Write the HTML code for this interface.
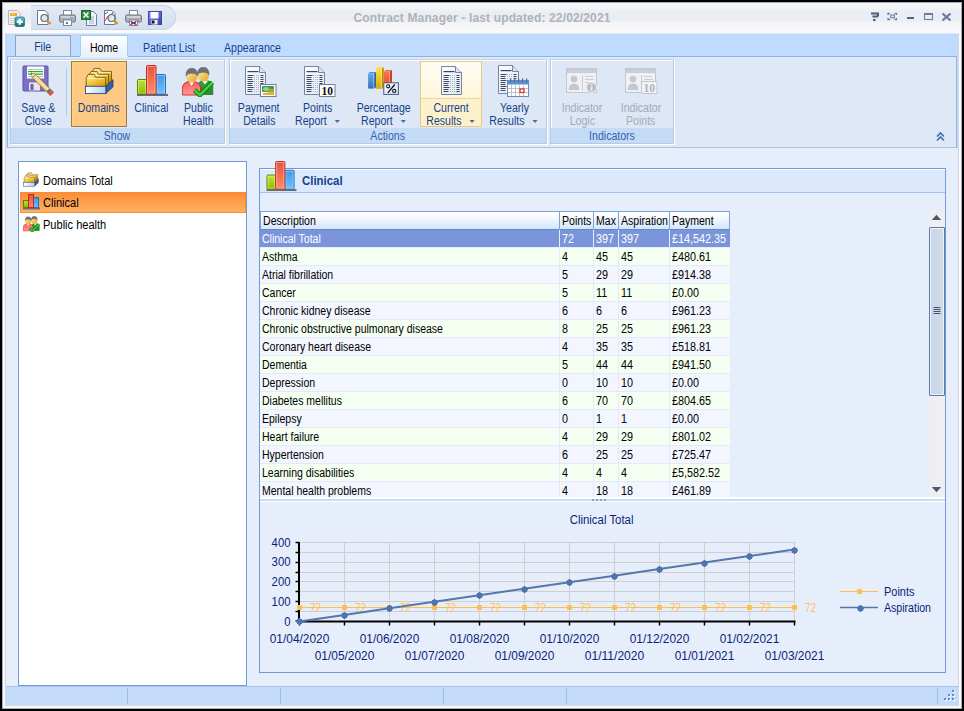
<!DOCTYPE html>
<html><head><meta charset="utf-8">
<style>
*{margin:0;padding:0;box-sizing:border-box}
html,body{width:964px;height:711px;overflow:hidden;background:#000}
body{position:relative;font-family:"Liberation Sans",sans-serif;font-size:12px;color:#000}
.a{position:absolute}
.t{position:absolute;white-space:nowrap;line-height:14px}
.s{display:inline-block}
</style></head><body>
<svg width="0" height="0" style="position:absolute">
<defs>
<linearGradient id="docg" x1="0" y1="0" x2="1" y2="1"><stop offset="0" stop-color="#ffffff"/><stop offset="1" stop-color="#dfe6f2"/></linearGradient>
<linearGradient id="gg" x1="0" y1="0" x2="0" y2="1"><stop offset="0" stop-color="#c4e03a"/><stop offset="1" stop-color="#8cbc00"/></linearGradient>
<linearGradient id="rg" x1="0" y1="0" x2="0" y2="1"><stop offset="0" stop-color="#e8503a"/><stop offset="1" stop-color="#ff8a70"/></linearGradient>
<linearGradient id="bg" x1="0" y1="0" x2="0" y2="1"><stop offset="0" stop-color="#3a98e8"/><stop offset="1" stop-color="#70c0ff"/></linearGradient>
<linearGradient id="fg" x1="0" y1="0" x2="0.6" y2="1"><stop offset="0" stop-color="#fff3b0"/><stop offset="0.45" stop-color="#f5cf50"/><stop offset="1" stop-color="#d89a08"/></linearGradient>
<linearGradient id="tg" x1="0" y1="0" x2="1" y2="0"><stop offset="0" stop-color="#ffffff"/><stop offset="1" stop-color="#b8cff0"/></linearGradient>
<symbol id="doc" viewBox="0 0 23 31">
 <path d="M1.5 1.5 H15.5 L21.5 7.5 V29.5 H1.5 Z" fill="url(#docg)" stroke="#7585a2"/>
 <path d="M15.5 1.5 V7.5 H21.5" fill="#dde3ee" stroke="#7585a2"/>
 <rect x="3.5" y="6" width="11" height="1.2" fill="#3a4660"/>
 <rect x="3.5" y="10" width="6" height="1" fill="#3a4660"/><rect x="10" y="10" width="1" height="1" fill="#a8b2c6"/><rect x="12" y="10" width="1" height="1" fill="#a8b2c6"/><rect x="14" y="10" width="1" height="1" fill="#a8b2c6"/><rect x="16.5" y="10" width="3" height="1" fill="#3a4660"/><rect x="3.5" y="12" width="5" height="1" fill="#3a4660"/><rect x="10" y="12" width="1" height="1" fill="#a8b2c6"/><rect x="12" y="12" width="1" height="1" fill="#a8b2c6"/><rect x="14" y="12" width="1" height="1" fill="#a8b2c6"/><rect x="16.5" y="12" width="3" height="1" fill="#3a4660"/><rect x="3.5" y="14" width="5" height="1" fill="#3a4660"/><rect x="10" y="14" width="1" height="1" fill="#a8b2c6"/><rect x="12" y="14" width="1" height="1" fill="#a8b2c6"/><rect x="14" y="14" width="1" height="1" fill="#a8b2c6"/><rect x="16.5" y="14" width="3" height="1" fill="#3a4660"/><rect x="3.5" y="16" width="6" height="1" fill="#3a4660"/><rect x="10" y="16" width="1" height="1" fill="#a8b2c6"/><rect x="12" y="16" width="1" height="1" fill="#a8b2c6"/><rect x="14" y="16" width="1" height="1" fill="#a8b2c6"/><rect x="16.5" y="16" width="3" height="1" fill="#3a4660"/><rect x="3.5" y="18" width="5" height="1" fill="#3a4660"/><rect x="10" y="18" width="1" height="1" fill="#a8b2c6"/><rect x="12" y="18" width="1" height="1" fill="#a8b2c6"/><rect x="14" y="18" width="1" height="1" fill="#a8b2c6"/><rect x="16.5" y="18" width="3" height="1" fill="#3a4660"/><rect x="3.5" y="20" width="5" height="1" fill="#3a4660"/><rect x="10" y="20" width="1" height="1" fill="#a8b2c6"/><rect x="12" y="20" width="1" height="1" fill="#a8b2c6"/><rect x="14" y="20" width="1" height="1" fill="#a8b2c6"/><rect x="16.5" y="20" width="3" height="1" fill="#3a4660"/><rect x="3.5" y="22" width="6" height="1" fill="#3a4660"/><rect x="10" y="22" width="1" height="1" fill="#a8b2c6"/><rect x="12" y="22" width="1" height="1" fill="#a8b2c6"/><rect x="14" y="22" width="1" height="1" fill="#a8b2c6"/><rect x="16.5" y="22" width="3" height="1" fill="#3a4660"/><rect x="3.5" y="24" width="5" height="1" fill="#3a4660"/><rect x="10" y="24" width="1" height="1" fill="#a8b2c6"/><rect x="12" y="24" width="1" height="1" fill="#a8b2c6"/><rect x="14" y="24" width="1" height="1" fill="#a8b2c6"/><rect x="16.5" y="24" width="3" height="1" fill="#3a4660"/><rect x="3.5" y="26" width="5" height="1" fill="#3a4660"/><rect x="10" y="26" width="1" height="1" fill="#a8b2c6"/><rect x="12" y="26" width="1" height="1" fill="#a8b2c6"/><rect x="14" y="26" width="1" height="1" fill="#a8b2c6"/><rect x="16.5" y="26" width="3" height="1" fill="#3a4660"/>
</symbol>
<symbol id="chart" viewBox="0 0 32 32">
 <rect x="1" y="29" width="31" height="2" fill="#6e6a72"/>
 <rect x="1.5" y="14.5" width="9" height="14.5" rx="1" fill="url(#gg)" stroke="#4f8a00"/>
 <rect x="2.6" y="15.6" width="6.8" height="12.4" fill="none" stroke="#e4f890" stroke-width="0.8" opacity="0.7"/>
 <rect x="20" y="9.5" width="9.5" height="19.5" rx="1" fill="url(#bg)" stroke="#1f70c0"/>
 <rect x="21.1" y="10.6" width="7.3" height="17.4" fill="none" stroke="#b8e4ff" stroke-width="0.8" opacity="0.7"/>
 <rect x="10.5" y="0.5" width="9.5" height="28.5" rx="1" fill="url(#rg)" stroke="#b8301c"/>
 <rect x="11.6" y="1.6" width="7.3" height="26.4" fill="none" stroke="#ffc0b0" stroke-width="0.8" opacity="0.8"/>
</symbol>
<linearGradient id="face" x1="0" y1="0" x2="1" y2="1"><stop offset="0" stop-color="#fff0b0"/><stop offset="1" stop-color="#e6a020"/></linearGradient>
<linearGradient id="redb" x1="0" y1="0" x2="0" y2="1"><stop offset="0" stop-color="#ff5a5a"/><stop offset="1" stop-color="#ff9a9a"/></linearGradient>
<linearGradient id="grnb" x1="0" y1="0" x2="0" y2="1"><stop offset="0" stop-color="#3aa040"/><stop offset="1" stop-color="#2a8a30"/></linearGradient>
<symbol id="people" viewBox="0 0 32 30">
 <path d="M15.5 27.5 V19 Q16 13.5 23 13.5 Q30.5 13.5 30.8 20 V27.5 Z" fill="url(#grnb)" stroke="#1f7a25" stroke-width="0.8"/>
 <path d="M20 13.6 L23 17.5 L26 13.6Z" fill="#fff"/>
 <ellipse cx="21.3" cy="8.2" rx="5.6" ry="6.4" fill="url(#face)"/>
 <path d="M15.6 8 Q15.3 0.3 21.3 0.3 Q27.2 0.3 27 8 Q26 5 21.3 5.2 Q17 5 15.6 8Z" fill="#707070" stroke="#5a5a5a" stroke-width="0.5"/>
 <path d="M0.4 28 V21 Q0.8 14.5 9.5 14.3 Q18 14.5 18.5 21 V28 Z" fill="url(#redb)" stroke="#d82020" stroke-width="0.9"/>
 <path d="M6.5 14.5 L9.5 20 L12.5 14.5Z" fill="#fff" stroke="#d82020" stroke-width="0.5"/>
 <ellipse cx="9.8" cy="9.2" rx="5.7" ry="6.5" fill="url(#face)"/>
 <path d="M4 9 Q3.8 1.2 9.8 1.2 Q15.8 1.2 15.6 9 Q14.6 6 9.8 6.2 Q5.4 6 4 9Z" fill="#707070" stroke="#5a5a5a" stroke-width="0.5"/>
 <path d="M12.5 23 L17.8 28 L30.5 15.5" fill="none" stroke="#0a7a0a" stroke-width="4.6" stroke-linejoin="miter"/>
 <path d="M12.5 23 L17.8 28 L30.5 15.5" fill="none" stroke="#40d040" stroke-width="2.6"/>
</symbol>
<symbol id="folders" viewBox="0 0 30 28"><path d="M8.5 4.4 L10 1.4000000000000004 H16 L17.5 4.4 H27.5 V15.4 H8 V4.4Z" fill="url(#fg)" stroke="#5e4a18" stroke-width="0.8"/><path d="M9.2 5.4 H26.6" stroke="#fff6c8" stroke-width="0.8"/><path d="M5.5 7.4 L7 4.4 H13 L14.5 7.4 H24.5 V18.4 H5 V7.4Z" fill="url(#fg)" stroke="#5e4a18" stroke-width="0.8"/><path d="M6.2 8.4 H23.6" stroke="#fff6c8" stroke-width="0.8"/><path d="M2.7 10.4 L4.2 7.4 H10.2 L11.7 10.4 H21.7 V21.4 H2.2 V10.4Z" fill="url(#fg)" stroke="#5e4a18" stroke-width="0.8"/><path d="M3.4000000000000004 11.4 H20.8" stroke="#fff6c8" stroke-width="0.8"/><path d="M21.8 19.3 L29 12.6 V19.8 L21.8 26.6Z" fill="#35609c" stroke="#1d3e70" stroke-width="0.8"/><rect x="1.4" y="19.3" width="20.4" height="7.3" fill="url(#tg)" stroke="#2a4a80" stroke-width="0.9"/></symbol>
<symbol id="card" viewBox="0 0 32 26">
 <rect x="0.5" y="0.5" width="30" height="24" fill="#eef0f4" stroke="#c2c6ce"/>
 <rect x="1" y="1" width="29" height="4" fill="#c9cdd5"/>
 <circle cx="8" cy="11" r="3.3" fill="#c3c7cf"/>
 <path d="M2.5 22 Q3 15.5 8 15.5 Q13 15.5 13.5 22Z" fill="#c3c7cf"/>
 <rect x="16" y="7" width="1" height="16" fill="#c9cdd5"/>
 <rect x="19" y="8" width="8" height="1" fill="#c9cdd5"/>
 <rect x="19" y="11" width="9" height="1" fill="#c9cdd5"/>
 <rect x="19" y="14" width="8" height="1" fill="#c9cdd5"/>
</symbol>
<symbol id="chart16" viewBox="0 0 17 17">
 <rect x="0" y="13.5" width="17" height="2" fill="#6e6a78"/>
 <rect x="0.5" y="6.5" width="5" height="7" fill="url(#gg)" stroke="#4f8a00"/>
 <rect x="10.5" y="3.5" width="5" height="10" fill="url(#bg)" stroke="#1f70c0"/>
 <rect x="5.5" y="0.5" width="5" height="13" fill="url(#rg)" stroke="#b8301c"/>
</symbol></defs></svg>
<div class="a" style="left:2px;top:2px;width:960px;height:707px;background:#fcf8fb;border:1px solid #a3afc2"></div>
<div class="a" style="left:5px;top:33px;width:954px;height:673px;background:#d3d8e0"></div>
<div class="a" style="left:3px;top:3px;width:958px;height:30px;background:linear-gradient(#fafafd 0px,#f6f5f7 1.5px,#f5f5f7 5px,#eef0f5 7px,#ebedf4 10px,#ebedf4 17px,#f3f2f5 19px,#f6f6f7 21px,#f5f7fc 25px,#fdf9fc 29px,#fdf9fc 30px)"></div>
<div class="a" style="left:31px;top:5px;width:145px;height:25px;background:linear-gradient(#e4eaf4,#d3dfee);border:1px solid #c6d4e8;border-left:none;border-radius:0 13px 13px 0"></div>
<!-- app icon -->
<svg class="a" style="left:7px;top:9px" width="18" height="18" viewBox="0 0 18 18">
 <path d="M1.5 1.5 H10 L13 4.5 V15.5 H1.5Z" fill="#f0f0f0" stroke="#b8b8b8"/>
 <rect x="3" y="4" width="7" height="3" fill="#f5a030"/><rect x="4" y="4.5" width="4" height="1.5" fill="#f8d040"/>
 <rect x="3" y="9" width="6" height="0.7" fill="#c8c8c8"/><rect x="3" y="11" width="6" height="0.7" fill="#c8c8c8"/><rect x="3" y="13" width="5" height="0.7" fill="#c8c8c8"/>
 <linearGradient id="tq" x1="0" y1="0" x2="0" y2="1"><stop offset="0" stop-color="#60c0d8"/><stop offset="1" stop-color="#0a6a70"/></linearGradient><rect x="8" y="8" width="9.5" height="9.5" rx="1.5" fill="url(#tq)" stroke="#0e6068" stroke-width="0.6"/>
 <path d="M12.75 9.8 V15.7 M9.8 12.75 H15.7" stroke="#fff" stroke-width="2.4"/>
</svg>
<!-- QAT icons -->
<svg class="a" style="left:36px;top:10px" width="16" height="16" viewBox="0 0 16 16">
 <path d="M1.5 0.5 H9 L12 3.5 V14.5 H1.5Z" fill="#fff" stroke="#6a7890"/>
 <circle cx="8.5" cy="8" r="3.5" fill="#dce8f4" stroke="#606870" stroke-width="1.2"/>
 <path d="M11 10.5 L14.5 14" stroke="#e09020" stroke-width="2.4"/>
</svg>
<svg class="a" style="left:59px;top:10px" width="17" height="16" viewBox="0 0 17 16">
 <rect x="4.5" y="0.5" width="8" height="5" fill="#fff" stroke="#808890"/>
 <rect x="0.5" y="5" width="16" height="7" rx="1.5" fill="#a8adb4" stroke="#707880"/>
 <rect x="2" y="6" width="13" height="2" fill="#d0d4da"/>
 <rect x="4.5" y="10" width="8" height="5.5" fill="#fff" stroke="#808890"/>
 <rect x="7" y="12" width="2" height="2" fill="#3a7ad0"/>
 <rect x="11" y="7" width="3" height="1" fill="#5aaae0"/>
</svg>
<svg class="a" style="left:81px;top:10px" width="17" height="16" viewBox="0 0 17 16">
 <path d="M5.5 1.5 H12.5 L15.5 4.5 V15.5 H5.5Z" fill="#eef3fb" stroke="#6a7fa8"/>
 <path d="M8 7 H13 M8 9 H13 M8 11 H13 M8 13 H13" stroke="#8aa0c8" stroke-width="0.8"/>
 <rect x="0.5" y="0.5" width="9" height="9" fill="#2e8a3a" stroke="#1d6a28"/>
 <path d="M2.5 2.5 L7.5 7.5 M7.5 2.5 L2.5 7.5" stroke="#fff" stroke-width="1.6"/>
</svg>
<svg class="a" style="left:103px;top:10px" width="16" height="16" viewBox="0 0 16 16">
 <path d="M1.5 0.5 H9 L12 3.5 V14.5 H1.5Z" fill="#fff" stroke="#6a7890"/>
 <path d="M2 11 L5 6 L7 8 L10 2" fill="none" stroke="#e02020" stroke-width="0.9"/>
 <path d="M2 4 L5 2" stroke="#2040d0" stroke-width="0.9"/>
 <circle cx="8.5" cy="8" r="3.5" fill="#dce8f4" fill-opacity="0.85" stroke="#606870" stroke-width="1.2"/>
 <path d="M11 10.5 L14.5 14" stroke="#e09020" stroke-width="2.4"/>
</svg>
<svg class="a" style="left:125px;top:10px" width="17" height="16" viewBox="0 0 17 16">
 <rect x="4.5" y="0.5" width="8" height="5" fill="#fff" stroke="#808890"/>
 <rect x="0.5" y="5" width="16" height="7" rx="1.5" fill="#a8adb4" stroke="#707880"/>
 <rect x="2" y="6" width="13" height="2" fill="#d0d4da"/>
 <rect x="4.5" y="10" width="8" height="5.5" fill="#fff" stroke="#808890"/>
 <path d="M5.5 11 L11.5 15 M11.5 11 L5.5 15" stroke="#e02020" stroke-width="1.2"/>
 <rect x="6" y="12.3" width="5" height="1.4" fill="#2040c0"/>
</svg>
<svg class="a" style="left:148px;top:11px" width="14" height="14" viewBox="0 0 14 14">
 <linearGradient id="sv" x1="0" y1="0" x2="1" y2="1"><stop offset="0" stop-color="#8a8af0"/><stop offset="1" stop-color="#3c3cb0"/></linearGradient>
 <rect x="0.5" y="0.5" width="13" height="13" fill="url(#sv)" stroke="#30308a" stroke-width="0.8"/>
 <rect x="2.5" y="1" width="8" height="6.5" fill="#fafaff"/>
 <rect x="3.5" y="9" width="6" height="4.5" fill="#f0f0f0"/>
 <rect x="4" y="9.5" width="2.5" height="3" fill="#111"/>
</svg>
<!-- window controls -->
<svg class="a" style="left:868px;top:11px" width="88" height="12" viewBox="0 0 88 12">
 <path d="M3 2.5 H10 V5.5 M10 5.5 H5.5 V6.5" fill="none" stroke="#4d5c78" stroke-width="2"/>
 <rect x="5" y="8" width="2.5" height="2" fill="#4d5c78"/>
 <path d="M20 4 V2.5 H22 M26.5 2.5 H28.5 V4 M28.5 7 V8.5 H26.5 M22 8.5 H20 V7" fill="none" stroke="#6a82a6" stroke-width="1.3"/>
 <rect x="22.8" y="4" width="3.6" height="2.8" fill="none" stroke="#6a82a6" stroke-width="1.1"/>
 <rect x="39" y="6" width="7" height="2" fill="#56647e"/>
 <rect x="56.5" y="2.5" width="8" height="6" fill="none" stroke="#6d80a2" stroke-width="1.1"/>
 <rect x="56" y="2" width="9" height="2" fill="#6d80a2"/>
 <path d="M74.5 2.5 L82.5 9.5 M82.5 2.5 L74.5 9.5" stroke="#6a7c9e" stroke-width="2.3"/>
</svg>


<div class="t" style="left:0px;top:11px;font-size:12px;color:#adb2bb;width:964px;text-align:center;font-weight:bold;letter-spacing:0.15px;"><span class="s" style="transform:scaleX(1.0);transform-origin:50% 0">Contract Manager - last updated: 22/02/2021</span></div>
<div class="a" style="left:5px;top:33px;width:954px;height:1px;background:#dfe6ef"></div>
<div class="a" style="left:6px;top:34px;width:952px;height:114px;background:#bfdbff"></div>
<div class="a" style="left:15px;top:35px;width:56px;height:22px;background:#dce6f5;border:1px solid #93a3bb;border-bottom:none"></div>
<div class="t" style="left:15px;top:40px;font-size:12px;color:#15428b;width:56px;text-align:center;"><span class="s" style="transform:scaleX(0.88);transform-origin:50% 0">File</span></div>
<div class="a" style="left:80px;top:35px;width:48px;height:23px;background:linear-gradient(#ffffff,#e6eefa);border:1px solid #9fd0f2;border-bottom:none"></div>
<div class="t" style="left:80px;top:41px;font-size:12px;color:#000;width:48px;text-align:center;"><span class="s" style="transform:scaleX(0.88);transform-origin:50% 0">Home</span></div>
<div class="t" style="left:143px;top:41px;font-size:12px;color:#15428b;"><span class="s" style="transform:scaleX(0.88);transform-origin:0 0">Patient List</span></div>
<div class="t" style="left:224px;top:41px;font-size:12px;color:#15428b;"><span class="s" style="transform:scaleX(0.88);transform-origin:0 0">Appearance</span></div>
<div class="a" style="left:7px;top:56px;width:950px;height:92px;background:#dfe8f6;border:1px solid #8fb4e0;border-bottom-color:#b0c2d8"></div>
<div class="a" style="left:80px;top:56px;width:48px;height:1px;background:#eef4fc"></div>
<div class="a" style="left:10px;top:59px;width:215px;height:85px;border:1px solid #b8cbe2;border-top-color:#c6d3e3;box-shadow:1px 1px 0 #fff,inset 1px 1px 0 #fff;background:#dde7f5"></div>
<div class="a" style="left:11px;top:128px;width:213px;height:15px;background:#c4dbf5"></div>
<div class="t" style="left:11px;top:129px;font-size:12px;color:#2f62b0;width:213px;text-align:center;"><span class="s" style="transform:scaleX(0.88);transform-origin:50% 0">Show</span></div>
<div class="a" style="left:229px;top:59px;width:318px;height:85px;border:1px solid #b8cbe2;border-top-color:#c6d3e3;box-shadow:1px 1px 0 #fff,inset 1px 1px 0 #fff;background:#dde7f5"></div>
<div class="a" style="left:230px;top:128px;width:316px;height:15px;background:#c4dbf5"></div>
<div class="t" style="left:230px;top:129px;font-size:12px;color:#2f62b0;width:316px;text-align:center;"><span class="s" style="transform:scaleX(0.88);transform-origin:50% 0">Actions</span></div>
<div class="a" style="left:550px;top:59px;width:124px;height:85px;border:1px solid #b8cbe2;border-top-color:#c6d3e3;box-shadow:1px 1px 0 #fff,inset 1px 1px 0 #fff;background:#dde7f5"></div>
<div class="a" style="left:551px;top:128px;width:122px;height:15px;background:#c4dbf5"></div>
<div class="t" style="left:551px;top:129px;font-size:12px;color:#2f62b0;width:122px;text-align:center;"><span class="s" style="transform:scaleX(0.88);transform-origin:50% 0">Indicators</span></div>
<div class="a" style="left:66px;top:69px;width:1px;height:47px;background:#b1c6e4"></div>
<div class="a" style="left:71px;top:61px;width:56px;height:66px;background:#fec983;border:1px solid #9a7e52;box-shadow:inset 1px 1px 0 #ffd66a"></div>
<div class="a" style="left:420px;top:61px;width:62px;height:66px;background:linear-gradient(#fffdf3,#fff1c5);border:1px solid #e5c98a"></div>
<div class="a" style="left:421px;top:98px;width:60px;height:28px;background:#fdf1cc;border-top:1px solid #ead8a4"></div>
<div class="t" style="left:12px;top:101px;font-size:12px;color:#15428b;width:52px;text-align:center;"><span class="s" style="transform:scaleX(0.88);transform-origin:50% 0">Save &amp;</span></div>
<div class="t" style="left:12px;top:114px;font-size:12px;color:#15428b;width:52px;text-align:center;"><span class="s" style="transform:scaleX(0.88);transform-origin:50% 0">Close</span></div>
<div class="t" style="left:71px;top:101px;font-size:12px;color:#15428b;width:56px;text-align:center;"><span class="s" style="transform:scaleX(0.88);transform-origin:50% 0">Domains</span></div>
<div class="t" style="left:128px;top:101px;font-size:12px;color:#15428b;width:46px;text-align:center;"><span class="s" style="transform:scaleX(0.88);transform-origin:50% 0">Clinical</span></div>
<div class="t" style="left:174px;top:101px;font-size:12px;color:#15428b;width:48px;text-align:center;"><span class="s" style="transform:scaleX(0.88);transform-origin:50% 0">Public</span></div>
<div class="t" style="left:174px;top:114px;font-size:12px;color:#15428b;width:48px;text-align:center;"><span class="s" style="transform:scaleX(0.88);transform-origin:50% 0">Health</span></div>
<div class="t" style="left:232px;top:101px;font-size:12px;color:#15428b;width:54px;text-align:center;"><span class="s" style="transform:scaleX(0.88);transform-origin:50% 0">Payment</span></div>
<div class="t" style="left:232px;top:114px;font-size:12px;color:#15428b;width:54px;text-align:center;"><span class="s" style="transform:scaleX(0.88);transform-origin:50% 0">Details</span></div>
<div class="t" style="left:290px;top:101px;font-size:12px;color:#15428b;width:56px;text-align:center;"><span class="s" style="transform:scaleX(0.88);transform-origin:50% 0">Points</span></div>
<div class="t" style="left:290px;top:114px;font-size:12px;color:#15428b;width:56px;text-align:center;"><span class="s" style="transform:scaleX(0.88);transform-origin:50% 0">Report<span style="display:inline-block;width:0;height:0;border-left:3.5px solid transparent;border-right:3.5px solid transparent;border-top:3.5px solid #4a6cae;margin-left:9px;vertical-align:2px"></span></span></div>
<div class="t" style="left:350px;top:101px;font-size:12px;color:#15428b;width:68px;text-align:center;"><span class="s" style="transform:scaleX(0.88);transform-origin:50% 0">Percentage</span></div>
<div class="t" style="left:350px;top:114px;font-size:12px;color:#15428b;width:68px;text-align:center;"><span class="s" style="transform:scaleX(0.88);transform-origin:50% 0">Report<span style="display:inline-block;width:0;height:0;border-left:3.5px solid transparent;border-right:3.5px solid transparent;border-top:3.5px solid #4a6cae;margin-left:9px;vertical-align:2px"></span></span></div>
<div class="t" style="left:420px;top:101px;font-size:12px;color:#15428b;width:62px;text-align:center;"><span class="s" style="transform:scaleX(0.88);transform-origin:50% 0">Current</span></div>
<div class="t" style="left:420px;top:114px;font-size:12px;color:#15428b;width:62px;text-align:center;"><span class="s" style="transform:scaleX(0.88);transform-origin:50% 0">Results<span style="display:inline-block;width:0;height:0;border-left:3.5px solid transparent;border-right:3.5px solid transparent;border-top:3.5px solid #4a6cae;margin-left:9px;vertical-align:2px"></span></span></div>
<div class="t" style="left:484px;top:101px;font-size:12px;color:#15428b;width:60px;text-align:center;"><span class="s" style="transform:scaleX(0.88);transform-origin:50% 0">Yearly</span></div>
<div class="t" style="left:484px;top:114px;font-size:12px;color:#15428b;width:60px;text-align:center;"><span class="s" style="transform:scaleX(0.88);transform-origin:50% 0">Results<span style="display:inline-block;width:0;height:0;border-left:3.5px solid transparent;border-right:3.5px solid transparent;border-top:3.5px solid #4a6cae;margin-left:9px;vertical-align:2px"></span></span></div>
<div class="t" style="left:553px;top:101px;font-size:12px;color:#a3aab6;width:58px;text-align:center;"><span class="s" style="transform:scaleX(0.88);transform-origin:50% 0">Indicator</span></div>
<div class="t" style="left:553px;top:114px;font-size:12px;color:#a3aab6;width:58px;text-align:center;"><span class="s" style="transform:scaleX(0.88);transform-origin:50% 0">Logic</span></div>
<div class="t" style="left:612px;top:101px;font-size:12px;color:#a3aab6;width:58px;text-align:center;"><span class="s" style="transform:scaleX(0.88);transform-origin:50% 0">Indicator</span></div>
<div class="t" style="left:612px;top:114px;font-size:12px;color:#a3aab6;width:58px;text-align:center;"><span class="s" style="transform:scaleX(0.88);transform-origin:50% 0">Points</span></div>
<!-- ribbon icons -->
<svg class="a" style="left:22px;top:65px" width="32" height="32" viewBox="0 0 32 32">
 <rect x="1" y="1" width="25" height="25" rx="1" fill="#7c70c2" stroke="#5d52a3"/>
 <rect x="5" y="1.5" width="17" height="12" fill="#fdfdff"/>
 <rect x="6" y="4" width="15" height="0.8" fill="#b0b0b8"/>
 <rect x="6" y="6" width="15" height="1.2" fill="#22b022"/>
 <rect x="6" y="8.5" width="15" height="1.2" fill="#22b022"/>
 <rect x="6" y="11" width="15" height="0.8" fill="#b0b0b8"/>
 <rect x="7" y="17.5" width="11" height="8" fill="#e6e6ee"/>
 <rect x="8.5" y="19" width="3" height="6" fill="#6a5fb4"/>
 <path d="M13.63 9.37 L27.67 23.41 L24.41 26.67 L10.37 12.63Z" fill="#f3d58e" stroke="#8c6c34" stroke-width="0.8"/>
 <path d="M12.42 10.58 L26.46 24.62" stroke="#fff4cc" stroke-width="0.9"/>
 <path d="M27.67 23.41 L29.11 24.85 L25.85 28.11 L24.41 26.67Z" fill="#2f9a4a"/>
 <path d="M29.11 24.85 L31.63 27.37 L28.37 30.63 L25.85 28.11Z" fill="#e25560" stroke="#a03038" stroke-width="0.6"/>
 <path d="M13.63 9.37 L9 8 L10.37 12.63Z" fill="#f8e6bc" stroke="#8c6c34" stroke-width="0.6"/>
 <path d="M9 8 L10.3 8.6 L9.6 9.3Z" fill="#222"/>
</svg>
<svg class="a" style="left:84px;top:67px" width="30" height="28"><use href="#folders"/></svg>
<svg class="a" style="left:136px;top:65px" width="32" height="32"><use href="#chart"/></svg>
<svg class="a" style="left:182px;top:67px" width="32" height="30"><use href="#people"/></svg>
<svg class="a" style="left:244px;top:65px" width="23" height="31"><use href="#doc"/></svg>
<svg class="a" style="left:260px;top:84px" width="17" height="13" viewBox="0 0 17 13">
 <rect x="0.5" y="0.5" width="15.5" height="12" fill="#fff" stroke="#6f7f9c"/>
 <rect x="2" y="2" width="12" height="6" rx="1" fill="#3f9a50"/>
 <ellipse cx="6" cy="5" rx="3" ry="2" fill="#8fd08a"/>
 <rect x="8" y="5" width="6" height="1.6" fill="#d8a820"/><rect x="8" y="7.5" width="6" height="1.6" fill="#e8b828"/><rect x="3" y="9" width="11" height="1.8" fill="#d8a820"/>
</svg>
<svg class="a" style="left:303px;top:65px" width="23" height="31"><use href="#doc"/></svg>
<svg class="a" style="left:319px;top:84px" width="17" height="13" viewBox="0 0 17 13">
 <rect x="0.5" y="0.5" width="15.5" height="12" fill="#fff" stroke="#6f7f9c"/>
 <text x="8.3" y="11" text-anchor="middle" font-family="Liberation Serif" font-weight="bold" font-size="11.5" fill="#111">10</text>
</svg>
<svg class="a" style="left:367px;top:66px" width="34" height="30" viewBox="0 0 34 30"><defs></defs><linearGradient id="pb1" x1="0" y1="0" x2="0" y2="1"><stop offset="0" stop-color="#64a8ec"/><stop offset="1" stop-color="#3470b8"/></linearGradient><path d="M1.1 7.6 L2.7 6.0 H9.0 L7.2 7.6Z" fill="#4a90e0"/><path d="M7.2 7.6 L9.0 6.0 V21.200000000000003 L7.2 22.6Z" fill="#1c5aa8"/><rect x="1.1" y="7.6" width="6.1" height="15.000000000000002" fill="url(#pb1)"/><rect x="6.0" y="7.6" width="1" height="15.000000000000002" fill="#ffffff" opacity="0.35"/><linearGradient id="pb2" x1="0" y1="0" x2="0" y2="1"><stop offset="0" stop-color="#ffe040"/><stop offset="1" stop-color="#d8a808"/></linearGradient><path d="M8.9 2.8 L10.5 1.1999999999999997 H16.8 L15 2.8Z" fill="#f8d838"/><path d="M15 2.8 L16.8 1.1999999999999997 V21.400000000000002 L15 22.8Z" fill="#c09000"/><rect x="8.9" y="2.8" width="6.1" height="20.0" fill="url(#pb2)"/><rect x="13.8" y="2.8" width="1" height="20.0" fill="#ffffff" opacity="0.35"/><linearGradient id="pb3" x1="0" y1="0" x2="0" y2="1"><stop offset="0" stop-color="#ff7048"/><stop offset="1" stop-color="#e05030"/></linearGradient><path d="M17 5.6 L18.6 3.9999999999999996 H24.900000000000002 L23.1 5.6Z" fill="#f06840"/><path d="M23.1 5.6 L24.900000000000002 3.9999999999999996 V18.6 L23.1 20Z" fill="#c03010"/><rect x="17" y="5.6" width="6.100000000000001" height="14.4" fill="url(#pb3)"/><rect x="21.900000000000002" y="5.6" width="1" height="14.4" fill="#ffffff" opacity="0.35"/><linearGradient id="pbg" x1="0" y1="0" x2="1" y2="1"><stop offset="0" stop-color="#ffffff"/><stop offset="1" stop-color="#cfe0f8"/></linearGradient><rect x="16.8" y="16.8" width="14.6" height="11.6" fill="url(#pbg)" stroke="#4a5a78" stroke-width="1"/><circle cx="21.2" cy="20.3" r="1.6" fill="none" stroke="#111" stroke-width="1.1"/><circle cx="27.2" cy="24.9" r="1.6" fill="none" stroke="#111" stroke-width="1.1"/><path d="M27.8 18.5 L20.8 26.8" stroke="#111" stroke-width="1.3"/></svg>
<svg class="a" style="left:440px;top:65px" width="23" height="31"><use href="#doc"/></svg>
<svg class="a" style="left:497px;top:64px" width="23" height="31"><use href="#doc"/></svg>
<svg class="a" style="left:507px;top:78px" width="23" height="19" viewBox="0 0 23 19">
 <rect x="0.5" y="2.5" width="21" height="16" fill="#fff" stroke="#6f8ab8"/>
 <rect x="0.5" y="2.5" width="21" height="4" fill="#5a8fd8"/>
 <rect x="3" y="0.5" width="1.2" height="4" fill="#5a6a8a"/><rect x="7" y="0.5" width="1.2" height="4" fill="#5a6a8a"/><rect x="11" y="0.5" width="1.2" height="4" fill="#5a6a8a"/><rect x="15" y="0.5" width="1.2" height="4" fill="#5a6a8a"/><rect x="19" y="0.5" width="1.2" height="4" fill="#5a6a8a"/>
 <path d="M4.5 7 V18 M8.5 7 V18 M12.5 7 V18 M16.5 7 V18 M1 10.5 H21 M1 14.5 H21" stroke="#a8b4cc" stroke-width="0.8"/>
 <rect x="13" y="11" width="4" height="3.5" fill="none" stroke="#e83a1a" stroke-width="1.3"/>
</svg>
<svg class="a" style="left:566px;top:68px" width="32" height="26"><use href="#card"/></svg>
<svg class="a" style="left:585px;top:81px" width="13" height="13" viewBox="0 0 13 13"><circle cx="6.5" cy="6.5" r="5" fill="#b8bcc4" stroke="#eef0f4"/><rect x="5.8" y="5.5" width="1.6" height="4.5" fill="#eef0f4"/><rect x="5.8" y="3" width="1.6" height="1.5" fill="#eef0f4"/></svg>
<svg class="a" style="left:625px;top:68px" width="32" height="26"><use href="#card"/></svg>
<svg class="a" style="left:641px;top:81px" width="17" height="13" viewBox="0 0 17 13">
 <rect x="0.5" y="0.5" width="15.5" height="12" fill="#f2f3f6" stroke="#c2c6ce"/>
 <text x="8.3" y="11" text-anchor="middle" font-family="Liberation Serif" font-weight="bold" font-size="11.5" fill="#b0b4bc">10</text>
</svg>


<svg class="a" style="left:935px;top:130px" width="12" height="12" viewBox="0 0 12 12"><path d="M2 6.5 L5.5 3 L9 6.5 M2 10.5 L5.5 7 L9 10.5" fill="none" stroke="#3c6eb4" stroke-width="1.6"/></svg>
<div class="a" style="left:6px;top:148px;width:952px;height:539px;background:#e6eefc"></div>
<div class="a" style="left:6px;top:686px;width:952px;height:19px;background:#c5dbfa;border-top:1px solid #a4c3ec"></div>
<div class="a" style="left:127px;top:688px;width:1px;height:16px;background:#9fbde6"></div>
<div class="a" style="left:280px;top:688px;width:1px;height:16px;background:#9fbde6"></div>
<div class="a" style="left:443px;top:688px;width:1px;height:16px;background:#9fbde6"></div>
<div class="a" style="left:566px;top:688px;width:1px;height:16px;background:#9fbde6"></div>
<div class="a" style="left:937px;top:688px;width:1px;height:16px;background:#9fbde6"></div>
<svg class="a" style="left:943px;top:689px" width="14" height="14" viewBox="0 0 14 14">
<g fill="#fff"><rect x="10" y="2" width="2" height="2"/><rect x="10" y="6" width="2" height="2"/><rect x="10" y="10" width="2" height="2"/><rect x="6" y="6" width="2" height="2"/><rect x="6" y="10" width="2" height="2"/><rect x="2" y="10" width="2" height="2"/></g>
<g fill="#5b8bd0"><rect x="9" y="1" width="2" height="2"/><rect x="9" y="5" width="2" height="2"/><rect x="9" y="9" width="2" height="2"/><rect x="5" y="5" width="2" height="2"/><rect x="5" y="9" width="2" height="2"/><rect x="1" y="9" width="2" height="2"/></g>
</svg>
<div class="a" style="left:18px;top:161px;width:229px;height:525px;background:#fff;border:1px solid #6f9cd6"></div>
<svg class="a" style="left:23px;top:172px" width="16" height="15" viewBox="0 0 30 28"><use href="#folders"/></svg>
<div class="t" style="left:43px;top:174px;font-size:12px;color:#000;"><span class="s" style="transform:scaleX(0.92);transform-origin:0 0">Domains Total</span></div>
<div class="a" style="left:20px;top:192px;width:226px;height:21px;background:linear-gradient(#fc8e3a,#fdb163);border:1px solid #f98b34"></div>
<svg class="a" style="left:23px;top:194px" width="17" height="17"><use href="#chart16"/></svg>
<div class="t" style="left:43px;top:196px;font-size:12px;color:#000;"><span class="s" style="transform:scaleX(0.92);transform-origin:0 0">Clinical</span></div>
<svg class="a" style="left:23px;top:216px" width="17" height="16" viewBox="0 0 32 30"><use href="#people"/></svg>
<div class="t" style="left:43px;top:218px;font-size:12px;color:#000;"><span class="s" style="transform:scaleX(0.92);transform-origin:0 0">Public health</span></div>
<div class="a" style="left:259px;top:168px;width:687px;height:25px;background:#dce9fc;border:1px solid #6f9cd6;border-bottom-color:#a4c5f2;box-shadow:inset 0 1px 0 #fff"></div>
<svg class="a" style="left:265px;top:161px" width="32" height="31"><use href="#chart"/></svg>
<div class="t" style="left:302px;top:174px;font-size:12px;color:#15428b;font-weight:bold;"><span class="s" style="transform:scaleX(0.95);transform-origin:0 0">Clinical</span></div>
<div class="a" style="left:259px;top:192px;width:687px;height:481px;border:1px solid #6f9cd6;border-top:none"></div>
<div class="a" style="left:260px;top:211px;width:470px;height:19px;background:linear-gradient(#ffffff 10%,#d5e5fb);border:1px solid #7aa3d8;border-bottom-color:#5b8ccc;border-right:none"></div>
<div class="a" style="left:559px;top:211px;width:1px;height:19px;background:#7aa3d8"></div>
<div class="t" style="left:263px;top:214px;font-size:12px;color:#000;"><span class="s" style="transform:scaleX(0.88);transform-origin:0 0">Description</span></div>
<div class="a" style="left:593px;top:211px;width:1px;height:19px;background:#7aa3d8"></div>
<div class="t" style="left:562px;top:214px;font-size:12px;color:#000;"><span class="s" style="transform:scaleX(0.88);transform-origin:0 0">Points</span></div>
<div class="a" style="left:618px;top:211px;width:1px;height:19px;background:#7aa3d8"></div>
<div class="t" style="left:596px;top:214px;font-size:12px;color:#000;"><span class="s" style="transform:scaleX(0.88);transform-origin:0 0">Max</span></div>
<div class="a" style="left:669px;top:211px;width:1px;height:19px;background:#7aa3d8"></div>
<div class="t" style="left:621px;top:214px;font-size:12px;color:#000;"><span class="s" style="transform:scaleX(0.88);transform-origin:0 0">Aspiration</span></div>
<div class="a" style="left:729px;top:211px;width:1px;height:19px;background:#7aa3d8"></div>
<div class="t" style="left:672px;top:214px;font-size:12px;color:#000;"><span class="s" style="transform:scaleX(0.88);transform-origin:0 0">Payment</span></div>
<div class="a" style="left:260px;top:230px;width:470px;height:267px;overflow:hidden">
<div class="a" style="left:0;top:0px;width:470px;height:17px;background:#7b95da"></div>
<div class="a" style="left:0;top:17px;width:470px;height:1px;background:#e8eefa"></div>
<div class="a" style="left:299px;top:0px;width:1px;height:17px;background:#e8eefa"></div>
<div class="a" style="left:333px;top:0px;width:1px;height:17px;background:#e8eefa"></div>
<div class="a" style="left:358px;top:0px;width:1px;height:17px;background:#e8eefa"></div>
<div class="a" style="left:409px;top:0px;width:1px;height:17px;background:#e8eefa"></div>
<div class="t" style="left:2px;top:2px;font-size:12px;color:#fff;"><span class="s" style="transform:scaleX(0.875);transform-origin:0 0">Clinical Total</span></div>
<div class="t" style="left:302px;top:2px;font-size:12px;color:#fff;"><span class="s" style="transform:scaleX(0.9);transform-origin:0 0">72</span></div>
<div class="t" style="left:336px;top:2px;font-size:12px;color:#fff;"><span class="s" style="transform:scaleX(0.9);transform-origin:0 0">397</span></div>
<div class="t" style="left:361px;top:2px;font-size:12px;color:#fff;"><span class="s" style="transform:scaleX(0.9);transform-origin:0 0">397</span></div>
<div class="t" style="left:412px;top:2px;font-size:12px;color:#fff;"><span class="s" style="transform:scaleX(0.9);transform-origin:0 0">£14,542.35</span></div>
<div class="a" style="left:0;top:18px;width:470px;height:17px;background:#f4fff2"></div>
<div class="a" style="left:0;top:35px;width:470px;height:1px;background:#e2eaf7"></div>
<div class="a" style="left:299px;top:18px;width:1px;height:17px;background:#e2eaf7"></div>
<div class="a" style="left:333px;top:18px;width:1px;height:17px;background:#e2eaf7"></div>
<div class="a" style="left:358px;top:18px;width:1px;height:17px;background:#e2eaf7"></div>
<div class="a" style="left:409px;top:18px;width:1px;height:17px;background:#e2eaf7"></div>
<div class="t" style="left:2px;top:20px;font-size:12px;color:#000;"><span class="s" style="transform:scaleX(0.875);transform-origin:0 0">Asthma</span></div>
<div class="t" style="left:302px;top:20px;font-size:12px;color:#000;"><span class="s" style="transform:scaleX(0.9);transform-origin:0 0">4</span></div>
<div class="t" style="left:336px;top:20px;font-size:12px;color:#000;"><span class="s" style="transform:scaleX(0.9);transform-origin:0 0">45</span></div>
<div class="t" style="left:361px;top:20px;font-size:12px;color:#000;"><span class="s" style="transform:scaleX(0.9);transform-origin:0 0">45</span></div>
<div class="t" style="left:412px;top:20px;font-size:12px;color:#000;"><span class="s" style="transform:scaleX(0.9);transform-origin:0 0">£480.61</span></div>
<div class="a" style="left:0;top:36px;width:470px;height:17px;background:#f3f6ff"></div>
<div class="a" style="left:0;top:53px;width:470px;height:1px;background:#e2eaf7"></div>
<div class="a" style="left:299px;top:36px;width:1px;height:17px;background:#e2eaf7"></div>
<div class="a" style="left:333px;top:36px;width:1px;height:17px;background:#e2eaf7"></div>
<div class="a" style="left:358px;top:36px;width:1px;height:17px;background:#e2eaf7"></div>
<div class="a" style="left:409px;top:36px;width:1px;height:17px;background:#e2eaf7"></div>
<div class="t" style="left:2px;top:38px;font-size:12px;color:#000;"><span class="s" style="transform:scaleX(0.875);transform-origin:0 0">Atrial fibrillation</span></div>
<div class="t" style="left:302px;top:38px;font-size:12px;color:#000;"><span class="s" style="transform:scaleX(0.9);transform-origin:0 0">5</span></div>
<div class="t" style="left:336px;top:38px;font-size:12px;color:#000;"><span class="s" style="transform:scaleX(0.9);transform-origin:0 0">29</span></div>
<div class="t" style="left:361px;top:38px;font-size:12px;color:#000;"><span class="s" style="transform:scaleX(0.9);transform-origin:0 0">29</span></div>
<div class="t" style="left:412px;top:38px;font-size:12px;color:#000;"><span class="s" style="transform:scaleX(0.9);transform-origin:0 0">£914.38</span></div>
<div class="a" style="left:0;top:54px;width:470px;height:17px;background:#f4fff2"></div>
<div class="a" style="left:0;top:71px;width:470px;height:1px;background:#e2eaf7"></div>
<div class="a" style="left:299px;top:54px;width:1px;height:17px;background:#e2eaf7"></div>
<div class="a" style="left:333px;top:54px;width:1px;height:17px;background:#e2eaf7"></div>
<div class="a" style="left:358px;top:54px;width:1px;height:17px;background:#e2eaf7"></div>
<div class="a" style="left:409px;top:54px;width:1px;height:17px;background:#e2eaf7"></div>
<div class="t" style="left:2px;top:56px;font-size:12px;color:#000;"><span class="s" style="transform:scaleX(0.875);transform-origin:0 0">Cancer</span></div>
<div class="t" style="left:302px;top:56px;font-size:12px;color:#000;"><span class="s" style="transform:scaleX(0.9);transform-origin:0 0">5</span></div>
<div class="t" style="left:336px;top:56px;font-size:12px;color:#000;"><span class="s" style="transform:scaleX(0.9);transform-origin:0 0">11</span></div>
<div class="t" style="left:361px;top:56px;font-size:12px;color:#000;"><span class="s" style="transform:scaleX(0.9);transform-origin:0 0">11</span></div>
<div class="t" style="left:412px;top:56px;font-size:12px;color:#000;"><span class="s" style="transform:scaleX(0.9);transform-origin:0 0">£0.00</span></div>
<div class="a" style="left:0;top:72px;width:470px;height:17px;background:#f3f6ff"></div>
<div class="a" style="left:0;top:89px;width:470px;height:1px;background:#e2eaf7"></div>
<div class="a" style="left:299px;top:72px;width:1px;height:17px;background:#e2eaf7"></div>
<div class="a" style="left:333px;top:72px;width:1px;height:17px;background:#e2eaf7"></div>
<div class="a" style="left:358px;top:72px;width:1px;height:17px;background:#e2eaf7"></div>
<div class="a" style="left:409px;top:72px;width:1px;height:17px;background:#e2eaf7"></div>
<div class="t" style="left:2px;top:74px;font-size:12px;color:#000;"><span class="s" style="transform:scaleX(0.875);transform-origin:0 0">Chronic kidney disease</span></div>
<div class="t" style="left:302px;top:74px;font-size:12px;color:#000;"><span class="s" style="transform:scaleX(0.9);transform-origin:0 0">6</span></div>
<div class="t" style="left:336px;top:74px;font-size:12px;color:#000;"><span class="s" style="transform:scaleX(0.9);transform-origin:0 0">6</span></div>
<div class="t" style="left:361px;top:74px;font-size:12px;color:#000;"><span class="s" style="transform:scaleX(0.9);transform-origin:0 0">6</span></div>
<div class="t" style="left:412px;top:74px;font-size:12px;color:#000;"><span class="s" style="transform:scaleX(0.9);transform-origin:0 0">£961.23</span></div>
<div class="a" style="left:0;top:90px;width:470px;height:17px;background:#f4fff2"></div>
<div class="a" style="left:0;top:107px;width:470px;height:1px;background:#e2eaf7"></div>
<div class="a" style="left:299px;top:90px;width:1px;height:17px;background:#e2eaf7"></div>
<div class="a" style="left:333px;top:90px;width:1px;height:17px;background:#e2eaf7"></div>
<div class="a" style="left:358px;top:90px;width:1px;height:17px;background:#e2eaf7"></div>
<div class="a" style="left:409px;top:90px;width:1px;height:17px;background:#e2eaf7"></div>
<div class="t" style="left:2px;top:92px;font-size:12px;color:#000;"><span class="s" style="transform:scaleX(0.875);transform-origin:0 0">Chronic obstructive pulmonary disease</span></div>
<div class="t" style="left:302px;top:92px;font-size:12px;color:#000;"><span class="s" style="transform:scaleX(0.9);transform-origin:0 0">8</span></div>
<div class="t" style="left:336px;top:92px;font-size:12px;color:#000;"><span class="s" style="transform:scaleX(0.9);transform-origin:0 0">25</span></div>
<div class="t" style="left:361px;top:92px;font-size:12px;color:#000;"><span class="s" style="transform:scaleX(0.9);transform-origin:0 0">25</span></div>
<div class="t" style="left:412px;top:92px;font-size:12px;color:#000;"><span class="s" style="transform:scaleX(0.9);transform-origin:0 0">£961.23</span></div>
<div class="a" style="left:0;top:108px;width:470px;height:17px;background:#f3f6ff"></div>
<div class="a" style="left:0;top:125px;width:470px;height:1px;background:#e2eaf7"></div>
<div class="a" style="left:299px;top:108px;width:1px;height:17px;background:#e2eaf7"></div>
<div class="a" style="left:333px;top:108px;width:1px;height:17px;background:#e2eaf7"></div>
<div class="a" style="left:358px;top:108px;width:1px;height:17px;background:#e2eaf7"></div>
<div class="a" style="left:409px;top:108px;width:1px;height:17px;background:#e2eaf7"></div>
<div class="t" style="left:2px;top:110px;font-size:12px;color:#000;"><span class="s" style="transform:scaleX(0.875);transform-origin:0 0">Coronary heart disease</span></div>
<div class="t" style="left:302px;top:110px;font-size:12px;color:#000;"><span class="s" style="transform:scaleX(0.9);transform-origin:0 0">4</span></div>
<div class="t" style="left:336px;top:110px;font-size:12px;color:#000;"><span class="s" style="transform:scaleX(0.9);transform-origin:0 0">35</span></div>
<div class="t" style="left:361px;top:110px;font-size:12px;color:#000;"><span class="s" style="transform:scaleX(0.9);transform-origin:0 0">35</span></div>
<div class="t" style="left:412px;top:110px;font-size:12px;color:#000;"><span class="s" style="transform:scaleX(0.9);transform-origin:0 0">£518.81</span></div>
<div class="a" style="left:0;top:126px;width:470px;height:17px;background:#f4fff2"></div>
<div class="a" style="left:0;top:143px;width:470px;height:1px;background:#e2eaf7"></div>
<div class="a" style="left:299px;top:126px;width:1px;height:17px;background:#e2eaf7"></div>
<div class="a" style="left:333px;top:126px;width:1px;height:17px;background:#e2eaf7"></div>
<div class="a" style="left:358px;top:126px;width:1px;height:17px;background:#e2eaf7"></div>
<div class="a" style="left:409px;top:126px;width:1px;height:17px;background:#e2eaf7"></div>
<div class="t" style="left:2px;top:128px;font-size:12px;color:#000;"><span class="s" style="transform:scaleX(0.875);transform-origin:0 0">Dementia</span></div>
<div class="t" style="left:302px;top:128px;font-size:12px;color:#000;"><span class="s" style="transform:scaleX(0.9);transform-origin:0 0">5</span></div>
<div class="t" style="left:336px;top:128px;font-size:12px;color:#000;"><span class="s" style="transform:scaleX(0.9);transform-origin:0 0">44</span></div>
<div class="t" style="left:361px;top:128px;font-size:12px;color:#000;"><span class="s" style="transform:scaleX(0.9);transform-origin:0 0">44</span></div>
<div class="t" style="left:412px;top:128px;font-size:12px;color:#000;"><span class="s" style="transform:scaleX(0.9);transform-origin:0 0">£941.50</span></div>
<div class="a" style="left:0;top:144px;width:470px;height:17px;background:#f3f6ff"></div>
<div class="a" style="left:0;top:161px;width:470px;height:1px;background:#e2eaf7"></div>
<div class="a" style="left:299px;top:144px;width:1px;height:17px;background:#e2eaf7"></div>
<div class="a" style="left:333px;top:144px;width:1px;height:17px;background:#e2eaf7"></div>
<div class="a" style="left:358px;top:144px;width:1px;height:17px;background:#e2eaf7"></div>
<div class="a" style="left:409px;top:144px;width:1px;height:17px;background:#e2eaf7"></div>
<div class="t" style="left:2px;top:146px;font-size:12px;color:#000;"><span class="s" style="transform:scaleX(0.875);transform-origin:0 0">Depression</span></div>
<div class="t" style="left:302px;top:146px;font-size:12px;color:#000;"><span class="s" style="transform:scaleX(0.9);transform-origin:0 0">0</span></div>
<div class="t" style="left:336px;top:146px;font-size:12px;color:#000;"><span class="s" style="transform:scaleX(0.9);transform-origin:0 0">10</span></div>
<div class="t" style="left:361px;top:146px;font-size:12px;color:#000;"><span class="s" style="transform:scaleX(0.9);transform-origin:0 0">10</span></div>
<div class="t" style="left:412px;top:146px;font-size:12px;color:#000;"><span class="s" style="transform:scaleX(0.9);transform-origin:0 0">£0.00</span></div>
<div class="a" style="left:0;top:162px;width:470px;height:17px;background:#f4fff2"></div>
<div class="a" style="left:0;top:179px;width:470px;height:1px;background:#e2eaf7"></div>
<div class="a" style="left:299px;top:162px;width:1px;height:17px;background:#e2eaf7"></div>
<div class="a" style="left:333px;top:162px;width:1px;height:17px;background:#e2eaf7"></div>
<div class="a" style="left:358px;top:162px;width:1px;height:17px;background:#e2eaf7"></div>
<div class="a" style="left:409px;top:162px;width:1px;height:17px;background:#e2eaf7"></div>
<div class="t" style="left:2px;top:164px;font-size:12px;color:#000;"><span class="s" style="transform:scaleX(0.875);transform-origin:0 0">Diabetes mellitus</span></div>
<div class="t" style="left:302px;top:164px;font-size:12px;color:#000;"><span class="s" style="transform:scaleX(0.9);transform-origin:0 0">6</span></div>
<div class="t" style="left:336px;top:164px;font-size:12px;color:#000;"><span class="s" style="transform:scaleX(0.9);transform-origin:0 0">70</span></div>
<div class="t" style="left:361px;top:164px;font-size:12px;color:#000;"><span class="s" style="transform:scaleX(0.9);transform-origin:0 0">70</span></div>
<div class="t" style="left:412px;top:164px;font-size:12px;color:#000;"><span class="s" style="transform:scaleX(0.9);transform-origin:0 0">£804.65</span></div>
<div class="a" style="left:0;top:180px;width:470px;height:17px;background:#f3f6ff"></div>
<div class="a" style="left:0;top:197px;width:470px;height:1px;background:#e2eaf7"></div>
<div class="a" style="left:299px;top:180px;width:1px;height:17px;background:#e2eaf7"></div>
<div class="a" style="left:333px;top:180px;width:1px;height:17px;background:#e2eaf7"></div>
<div class="a" style="left:358px;top:180px;width:1px;height:17px;background:#e2eaf7"></div>
<div class="a" style="left:409px;top:180px;width:1px;height:17px;background:#e2eaf7"></div>
<div class="t" style="left:2px;top:182px;font-size:12px;color:#000;"><span class="s" style="transform:scaleX(0.875);transform-origin:0 0">Epilepsy</span></div>
<div class="t" style="left:302px;top:182px;font-size:12px;color:#000;"><span class="s" style="transform:scaleX(0.9);transform-origin:0 0">0</span></div>
<div class="t" style="left:336px;top:182px;font-size:12px;color:#000;"><span class="s" style="transform:scaleX(0.9);transform-origin:0 0">1</span></div>
<div class="t" style="left:361px;top:182px;font-size:12px;color:#000;"><span class="s" style="transform:scaleX(0.9);transform-origin:0 0">1</span></div>
<div class="t" style="left:412px;top:182px;font-size:12px;color:#000;"><span class="s" style="transform:scaleX(0.9);transform-origin:0 0">£0.00</span></div>
<div class="a" style="left:0;top:198px;width:470px;height:17px;background:#f4fff2"></div>
<div class="a" style="left:0;top:215px;width:470px;height:1px;background:#e2eaf7"></div>
<div class="a" style="left:299px;top:198px;width:1px;height:17px;background:#e2eaf7"></div>
<div class="a" style="left:333px;top:198px;width:1px;height:17px;background:#e2eaf7"></div>
<div class="a" style="left:358px;top:198px;width:1px;height:17px;background:#e2eaf7"></div>
<div class="a" style="left:409px;top:198px;width:1px;height:17px;background:#e2eaf7"></div>
<div class="t" style="left:2px;top:200px;font-size:12px;color:#000;"><span class="s" style="transform:scaleX(0.875);transform-origin:0 0">Heart failure</span></div>
<div class="t" style="left:302px;top:200px;font-size:12px;color:#000;"><span class="s" style="transform:scaleX(0.9);transform-origin:0 0">4</span></div>
<div class="t" style="left:336px;top:200px;font-size:12px;color:#000;"><span class="s" style="transform:scaleX(0.9);transform-origin:0 0">29</span></div>
<div class="t" style="left:361px;top:200px;font-size:12px;color:#000;"><span class="s" style="transform:scaleX(0.9);transform-origin:0 0">29</span></div>
<div class="t" style="left:412px;top:200px;font-size:12px;color:#000;"><span class="s" style="transform:scaleX(0.9);transform-origin:0 0">£801.02</span></div>
<div class="a" style="left:0;top:216px;width:470px;height:17px;background:#f3f6ff"></div>
<div class="a" style="left:0;top:233px;width:470px;height:1px;background:#e2eaf7"></div>
<div class="a" style="left:299px;top:216px;width:1px;height:17px;background:#e2eaf7"></div>
<div class="a" style="left:333px;top:216px;width:1px;height:17px;background:#e2eaf7"></div>
<div class="a" style="left:358px;top:216px;width:1px;height:17px;background:#e2eaf7"></div>
<div class="a" style="left:409px;top:216px;width:1px;height:17px;background:#e2eaf7"></div>
<div class="t" style="left:2px;top:218px;font-size:12px;color:#000;"><span class="s" style="transform:scaleX(0.875);transform-origin:0 0">Hypertension</span></div>
<div class="t" style="left:302px;top:218px;font-size:12px;color:#000;"><span class="s" style="transform:scaleX(0.9);transform-origin:0 0">6</span></div>
<div class="t" style="left:336px;top:218px;font-size:12px;color:#000;"><span class="s" style="transform:scaleX(0.9);transform-origin:0 0">25</span></div>
<div class="t" style="left:361px;top:218px;font-size:12px;color:#000;"><span class="s" style="transform:scaleX(0.9);transform-origin:0 0">25</span></div>
<div class="t" style="left:412px;top:218px;font-size:12px;color:#000;"><span class="s" style="transform:scaleX(0.9);transform-origin:0 0">£725.47</span></div>
<div class="a" style="left:0;top:234px;width:470px;height:17px;background:#f4fff2"></div>
<div class="a" style="left:0;top:251px;width:470px;height:1px;background:#e2eaf7"></div>
<div class="a" style="left:299px;top:234px;width:1px;height:17px;background:#e2eaf7"></div>
<div class="a" style="left:333px;top:234px;width:1px;height:17px;background:#e2eaf7"></div>
<div class="a" style="left:358px;top:234px;width:1px;height:17px;background:#e2eaf7"></div>
<div class="a" style="left:409px;top:234px;width:1px;height:17px;background:#e2eaf7"></div>
<div class="t" style="left:2px;top:236px;font-size:12px;color:#000;"><span class="s" style="transform:scaleX(0.875);transform-origin:0 0">Learning disabilities</span></div>
<div class="t" style="left:302px;top:236px;font-size:12px;color:#000;"><span class="s" style="transform:scaleX(0.9);transform-origin:0 0">4</span></div>
<div class="t" style="left:336px;top:236px;font-size:12px;color:#000;"><span class="s" style="transform:scaleX(0.9);transform-origin:0 0">4</span></div>
<div class="t" style="left:361px;top:236px;font-size:12px;color:#000;"><span class="s" style="transform:scaleX(0.9);transform-origin:0 0">4</span></div>
<div class="t" style="left:412px;top:236px;font-size:12px;color:#000;"><span class="s" style="transform:scaleX(0.9);transform-origin:0 0">£5,582.52</span></div>
<div class="a" style="left:0;top:252px;width:470px;height:17px;background:#f3f6ff"></div>
<div class="a" style="left:0;top:269px;width:470px;height:1px;background:#e2eaf7"></div>
<div class="a" style="left:299px;top:252px;width:1px;height:17px;background:#e2eaf7"></div>
<div class="a" style="left:333px;top:252px;width:1px;height:17px;background:#e2eaf7"></div>
<div class="a" style="left:358px;top:252px;width:1px;height:17px;background:#e2eaf7"></div>
<div class="a" style="left:409px;top:252px;width:1px;height:17px;background:#e2eaf7"></div>
<div class="t" style="left:2px;top:254px;font-size:12px;color:#000;"><span class="s" style="transform:scaleX(0.875);transform-origin:0 0">Mental health problems</span></div>
<div class="t" style="left:302px;top:254px;font-size:12px;color:#000;"><span class="s" style="transform:scaleX(0.9);transform-origin:0 0">4</span></div>
<div class="t" style="left:336px;top:254px;font-size:12px;color:#000;"><span class="s" style="transform:scaleX(0.9);transform-origin:0 0">18</span></div>
<div class="t" style="left:361px;top:254px;font-size:12px;color:#000;"><span class="s" style="transform:scaleX(0.9);transform-origin:0 0">18</span></div>
<div class="t" style="left:412px;top:254px;font-size:12px;color:#000;"><span class="s" style="transform:scaleX(0.9);transform-origin:0 0">£461.89</span></div>
</div>
<div class="a" style="left:929px;top:211px;width:16px;height:286px;background:#efeff1"></div>
<svg class="a" style="left:929px;top:211px" width="16" height="16"><path d="M2.8 9 L7.5 3.8 L12.2 9Z" fill="#4a5878"/></svg>
<div class="a" style="left:929px;top:227px;width:16px;height:169px;background:linear-gradient(90deg,#c8d5e6,#d0dcea);border:1px solid #5d79a8;border-radius:1px"></div>
<div class="a" style="left:930px;top:228px;width:14px;height:167px;border:1px solid #eef3f9;border-radius:1px"></div>
<svg class="a" style="left:929px;top:306px" width="16" height="12"><path d="M4.5 1.5 H11.5 M4.5 3.5 H11.5 M4.5 5.5 H11.5 M4.5 7.5 H11.5" stroke="#3e4f78" stroke-width="1"/></svg>
<svg class="a" style="left:929px;top:481px" width="16" height="16"><path d="M2.8 6 L7.5 11.2 L12.2 6Z" fill="#4a5878"/></svg>
<div class="a" style="left:260px;top:497px;width:685px;height:2px;background:#ffffff"></div>
<div class="a" style="left:260px;top:499px;width:685px;height:2px;background:#c6ddfa"></div>
<div class="a" style="left:260px;top:501px;width:685px;height:1px;background:#ffffff"></div>
<div class="a" style="left:592px;top:499px;width:16px;height:2px;background:repeating-linear-gradient(90deg,#7da0d0 0 2px,transparent 2px 4px)"></div>
<div class="t" style="left:560px;top:513px;font-size:12px;color:#0b1e7a;width:84px;text-align:center;"><span class="s" style="transform:scaleX(0.95);transform-origin:50% 0">Clinical Total</span></div>
<svg class="a" style="left:260px;top:502px" width="685" height="170" viewBox="260 502 685 170" font-family="Liberation Sans"><line x1="300" y1="611.5" x2="795" y2="611.5" stroke="#d0cfcb" stroke-width="1"/>
<line x1="300" y1="601.5" x2="795" y2="601.5" stroke="#d0cfcb" stroke-width="1"/>
<line x1="300" y1="591.5" x2="795" y2="591.5" stroke="#d0cfcb" stroke-width="1"/>
<line x1="300" y1="581.5" x2="795" y2="581.5" stroke="#d0cfcb" stroke-width="1"/>
<line x1="300" y1="572.5" x2="795" y2="572.5" stroke="#d0cfcb" stroke-width="1"/>
<line x1="300" y1="562.5" x2="795" y2="562.5" stroke="#d0cfcb" stroke-width="1"/>
<line x1="300" y1="552.5" x2="795" y2="552.5" stroke="#d0cfcb" stroke-width="1"/>
<line x1="300" y1="542.5" x2="795" y2="542.5" stroke="#d0cfcb" stroke-width="1"/>
<line x1="344.5" y1="542" x2="344.5" y2="621" stroke="#d0cfcb" stroke-width="1"/>
<line x1="389.5" y1="542" x2="389.5" y2="621" stroke="#d0cfcb" stroke-width="1"/>
<line x1="434.5" y1="542" x2="434.5" y2="621" stroke="#d0cfcb" stroke-width="1"/>
<line x1="479.5" y1="542" x2="479.5" y2="621" stroke="#d0cfcb" stroke-width="1"/>
<line x1="524.5" y1="542" x2="524.5" y2="621" stroke="#d0cfcb" stroke-width="1"/>
<line x1="569.5" y1="542" x2="569.5" y2="621" stroke="#d0cfcb" stroke-width="1"/>
<line x1="614.5" y1="542" x2="614.5" y2="621" stroke="#d0cfcb" stroke-width="1"/>
<line x1="659.5" y1="542" x2="659.5" y2="621" stroke="#d0cfcb" stroke-width="1"/>
<line x1="704.5" y1="542" x2="704.5" y2="621" stroke="#d0cfcb" stroke-width="1"/>
<line x1="749.5" y1="542" x2="749.5" y2="621" stroke="#d0cfcb" stroke-width="1"/>
<line x1="794.5" y1="542" x2="794.5" y2="621" stroke="#d0cfcb" stroke-width="1"/>
<line x1="299" y1="542" x2="299" y2="622.5" stroke="#000" stroke-width="2"/>
<line x1="298" y1="621.5" x2="795.5" y2="621.5" stroke="#000" stroke-width="2"/>
<line x1="295.5" y1="621.0" x2="299" y2="621.0" stroke="#000" stroke-width="1.5"/>
<line x1="295.5" y1="611.5" x2="299" y2="611.5" stroke="#000" stroke-width="1.5"/>
<line x1="295.5" y1="601.5" x2="299" y2="601.5" stroke="#000" stroke-width="1.5"/>
<line x1="295.5" y1="591.5" x2="299" y2="591.5" stroke="#000" stroke-width="1.5"/>
<line x1="295.5" y1="581.5" x2="299" y2="581.5" stroke="#000" stroke-width="1.5"/>
<line x1="295.5" y1="572.5" x2="299" y2="572.5" stroke="#000" stroke-width="1.5"/>
<line x1="295.5" y1="562.5" x2="299" y2="562.5" stroke="#000" stroke-width="1.5"/>
<line x1="295.5" y1="552.5" x2="299" y2="552.5" stroke="#000" stroke-width="1.5"/>
<line x1="295.5" y1="542.5" x2="299" y2="542.5" stroke="#000" stroke-width="1.5"/>
<line x1="299.5" y1="621" x2="299.5" y2="625.5" stroke="#000" stroke-width="1.5"/>
<line x1="344.5" y1="621" x2="344.5" y2="625.5" stroke="#000" stroke-width="1.5"/>
<line x1="389.5" y1="621" x2="389.5" y2="625.5" stroke="#000" stroke-width="1.5"/>
<line x1="434.5" y1="621" x2="434.5" y2="625.5" stroke="#000" stroke-width="1.5"/>
<line x1="479.5" y1="621" x2="479.5" y2="625.5" stroke="#000" stroke-width="1.5"/>
<line x1="524.5" y1="621" x2="524.5" y2="625.5" stroke="#000" stroke-width="1.5"/>
<line x1="569.5" y1="621" x2="569.5" y2="625.5" stroke="#000" stroke-width="1.5"/>
<line x1="614.5" y1="621" x2="614.5" y2="625.5" stroke="#000" stroke-width="1.5"/>
<line x1="659.5" y1="621" x2="659.5" y2="625.5" stroke="#000" stroke-width="1.5"/>
<line x1="704.5" y1="621" x2="704.5" y2="625.5" stroke="#000" stroke-width="1.5"/>
<line x1="749.5" y1="621" x2="749.5" y2="625.5" stroke="#000" stroke-width="1.5"/>
<line x1="794.5" y1="621" x2="794.5" y2="625.5" stroke="#000" stroke-width="1.5"/>
<text x="290.5" y="625.7" text-anchor="end" font-size="12" fill="#0b1e7a" textLength="6.3" lengthAdjust="spacingAndGlyphs">0</text>
<text x="290.5" y="605.9" text-anchor="end" font-size="12" fill="#0b1e7a" textLength="18.9" lengthAdjust="spacingAndGlyphs">100</text>
<text x="290.5" y="586.2" text-anchor="end" font-size="12" fill="#0b1e7a" textLength="18.9" lengthAdjust="spacingAndGlyphs">200</text>
<text x="290.5" y="566.4" text-anchor="end" font-size="12" fill="#0b1e7a" textLength="18.9" lengthAdjust="spacingAndGlyphs">300</text>
<text x="290.5" y="546.7" text-anchor="end" font-size="12" fill="#0b1e7a" textLength="18.9" lengthAdjust="spacingAndGlyphs">400</text>
<text x="299.5" y="643" text-anchor="middle" font-size="12" fill="#0b1e7a" textLength="59.5" lengthAdjust="spacingAndGlyphs">01/04/2020</text>
<text x="344.5" y="660" text-anchor="middle" font-size="12" fill="#0b1e7a" textLength="59.5" lengthAdjust="spacingAndGlyphs">01/05/2020</text>
<text x="389.5" y="643" text-anchor="middle" font-size="12" fill="#0b1e7a" textLength="59.5" lengthAdjust="spacingAndGlyphs">01/06/2020</text>
<text x="434.5" y="660" text-anchor="middle" font-size="12" fill="#0b1e7a" textLength="59.5" lengthAdjust="spacingAndGlyphs">01/07/2020</text>
<text x="479.5" y="643" text-anchor="middle" font-size="12" fill="#0b1e7a" textLength="59.5" lengthAdjust="spacingAndGlyphs">01/08/2020</text>
<text x="524.5" y="660" text-anchor="middle" font-size="12" fill="#0b1e7a" textLength="59.5" lengthAdjust="spacingAndGlyphs">01/09/2020</text>
<text x="569.5" y="643" text-anchor="middle" font-size="12" fill="#0b1e7a" textLength="59.5" lengthAdjust="spacingAndGlyphs">01/10/2020</text>
<text x="614.5" y="660" text-anchor="middle" font-size="12" fill="#0b1e7a" textLength="59.5" lengthAdjust="spacingAndGlyphs">01/11/2020</text>
<text x="659.5" y="643" text-anchor="middle" font-size="12" fill="#0b1e7a" textLength="59.5" lengthAdjust="spacingAndGlyphs">01/12/2020</text>
<text x="704.5" y="660" text-anchor="middle" font-size="12" fill="#0b1e7a" textLength="59.5" lengthAdjust="spacingAndGlyphs">01/01/2021</text>
<text x="749.5" y="643" text-anchor="middle" font-size="12" fill="#0b1e7a" textLength="59.5" lengthAdjust="spacingAndGlyphs">01/02/2021</text>
<text x="794.5" y="660" text-anchor="middle" font-size="12" fill="#0b1e7a" textLength="59.5" lengthAdjust="spacingAndGlyphs">01/03/2021</text>
<text x="310" y="611.7" font-size="12" fill="#fdc060" textLength="11" lengthAdjust="spacingAndGlyphs">72</text>
<text x="355" y="611.7" font-size="12" fill="#fdc060" textLength="11" lengthAdjust="spacingAndGlyphs">72</text>
<text x="400" y="611.7" font-size="12" fill="#fdc060" textLength="11" lengthAdjust="spacingAndGlyphs">72</text>
<text x="445" y="611.7" font-size="12" fill="#fdc060" textLength="11" lengthAdjust="spacingAndGlyphs">72</text>
<text x="490" y="611.7" font-size="12" fill="#fdc060" textLength="11" lengthAdjust="spacingAndGlyphs">72</text>
<text x="535" y="611.7" font-size="12" fill="#fdc060" textLength="11" lengthAdjust="spacingAndGlyphs">72</text>
<text x="580" y="611.7" font-size="12" fill="#fdc060" textLength="11" lengthAdjust="spacingAndGlyphs">72</text>
<text x="625" y="611.7" font-size="12" fill="#fdc060" textLength="11" lengthAdjust="spacingAndGlyphs">72</text>
<text x="670" y="611.7" font-size="12" fill="#fdc060" textLength="11" lengthAdjust="spacingAndGlyphs">72</text>
<text x="715" y="611.7" font-size="12" fill="#fdc060" textLength="11" lengthAdjust="spacingAndGlyphs">72</text>
<text x="760" y="611.7" font-size="12" fill="#fdc060" textLength="11" lengthAdjust="spacingAndGlyphs">72</text>
<text x="805" y="611.7" font-size="12" fill="#fdc060" textLength="11" lengthAdjust="spacingAndGlyphs">72</text>
<line x1="299" y1="607.5" x2="794" y2="607.5" stroke="#ffc04a" stroke-width="1"/>
<rect x="297" y="605" width="5" height="5" rx="0.8" fill="#ffbf4a"/>
<rect x="342" y="605" width="5" height="5" rx="0.8" fill="#ffbf4a"/>
<rect x="387" y="605" width="5" height="5" rx="0.8" fill="#ffbf4a"/>
<rect x="432" y="605" width="5" height="5" rx="0.8" fill="#ffbf4a"/>
<rect x="477" y="605" width="5" height="5" rx="0.8" fill="#ffbf4a"/>
<rect x="522" y="605" width="5" height="5" rx="0.8" fill="#ffbf4a"/>
<rect x="567" y="605" width="5" height="5" rx="0.8" fill="#ffbf4a"/>
<rect x="612" y="605" width="5" height="5" rx="0.8" fill="#ffbf4a"/>
<rect x="657" y="605" width="5" height="5" rx="0.8" fill="#ffbf4a"/>
<rect x="702" y="605" width="5" height="5" rx="0.8" fill="#ffbf4a"/>
<rect x="747" y="605" width="5" height="5" rx="0.8" fill="#ffbf4a"/>
<rect x="792" y="605" width="5" height="5" rx="0.8" fill="#ffbf4a"/>
<polyline points="299.3,621.4 344.3,614.9 389.3,608.3 434.3,601.8 479.3,595.3 524.3,588.7 569.3,582.2 614.3,575.7 659.3,569.1 704.3,562.6 749.3,556.1 794.3,549.5" fill="none" stroke="#5578aa" stroke-width="2"/>
<rect x="297.0" y="619.0" width="5" height="5" fill="#4f74ae"/><rect x="298.5" y="618.0" width="2" height="7" fill="#4f74ae"/><rect x="296.0" y="620.5" width="7" height="2" fill="#4f74ae"/>
<rect x="342.0" y="613.0" width="5" height="5" fill="#4f74ae"/><rect x="343.5" y="612.0" width="2" height="7" fill="#4f74ae"/><rect x="341.0" y="614.5" width="7" height="2" fill="#4f74ae"/>
<rect x="387.0" y="606.0" width="5" height="5" fill="#4f74ae"/><rect x="388.5" y="605.0" width="2" height="7" fill="#4f74ae"/><rect x="386.0" y="607.5" width="7" height="2" fill="#4f74ae"/>
<rect x="432.0" y="600.0" width="5" height="5" fill="#4f74ae"/><rect x="433.5" y="599.0" width="2" height="7" fill="#4f74ae"/><rect x="431.0" y="601.5" width="7" height="2" fill="#4f74ae"/>
<rect x="477.0" y="593.0" width="5" height="5" fill="#4f74ae"/><rect x="478.5" y="592.0" width="2" height="7" fill="#4f74ae"/><rect x="476.0" y="594.5" width="7" height="2" fill="#4f74ae"/>
<rect x="522.0" y="587.0" width="5" height="5" fill="#4f74ae"/><rect x="523.5" y="586.0" width="2" height="7" fill="#4f74ae"/><rect x="521.0" y="588.5" width="7" height="2" fill="#4f74ae"/>
<rect x="567.0" y="580.0" width="5" height="5" fill="#4f74ae"/><rect x="568.5" y="579.0" width="2" height="7" fill="#4f74ae"/><rect x="566.0" y="581.5" width="7" height="2" fill="#4f74ae"/>
<rect x="612.0" y="574.0" width="5" height="5" fill="#4f74ae"/><rect x="613.5" y="573.0" width="2" height="7" fill="#4f74ae"/><rect x="611.0" y="575.5" width="7" height="2" fill="#4f74ae"/>
<rect x="657.0" y="567.0" width="5" height="5" fill="#4f74ae"/><rect x="658.5" y="566.0" width="2" height="7" fill="#4f74ae"/><rect x="656.0" y="568.5" width="7" height="2" fill="#4f74ae"/>
<rect x="702.0" y="561.0" width="5" height="5" fill="#4f74ae"/><rect x="703.5" y="560.0" width="2" height="7" fill="#4f74ae"/><rect x="701.0" y="562.5" width="7" height="2" fill="#4f74ae"/>
<rect x="747.0" y="554.0" width="5" height="5" fill="#4f74ae"/><rect x="748.5" y="553.0" width="2" height="7" fill="#4f74ae"/><rect x="746.0" y="555.5" width="7" height="2" fill="#4f74ae"/>
<rect x="792.0" y="548.0" width="5" height="5" fill="#4f74ae"/><rect x="793.5" y="547.0" width="2" height="7" fill="#4f74ae"/><rect x="791.0" y="549.5" width="7" height="2" fill="#4f74ae"/>
<line x1="840" y1="591.5" x2="878" y2="591.5" stroke="#ffc04a" stroke-width="1"/>
<rect x="857" y="589" width="5" height="5" rx="1" fill="#ffbf4a"/>
<text x="884" y="595.5" font-size="12" fill="#0b1e7a" textLength="30.5" lengthAdjust="spacingAndGlyphs">Points</text>
<line x1="840" y1="607.5" x2="878" y2="607.5" stroke="#5578aa" stroke-width="1.5"/>
<rect x="858.0" y="606.0" width="5" height="5" fill="#4f74ae"/><rect x="859.5" y="605.0" width="2" height="7" fill="#4f74ae"/><rect x="857.0" y="607.5" width="7" height="2" fill="#4f74ae"/>
<text x="884" y="611.5" font-size="12" fill="#0b1e7a" textLength="47" lengthAdjust="spacingAndGlyphs">Aspiration</text></svg>
</body></html>
